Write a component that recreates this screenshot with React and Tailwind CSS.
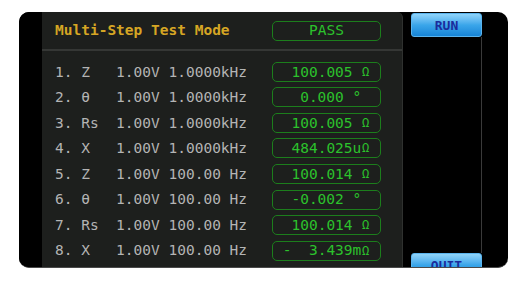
import React from 'react';

const rows = [
  { label: '1. Z   1.00V 1.0000kHz', value: '100.005 ', unit: 'Ω' },
  { label: '2. θ   1.00V 1.0000kHz', value: '0.000 ° ', unit: '' },
  { label: '3. Rs  1.00V 1.0000kHz', value: '100.005 ', unit: 'Ω' },
  { label: '4. X   1.00V 1.0000kHz', value: '484.025u', unit: 'Ω' },
  { label: '5. Z   1.00V 100.00 Hz', value: '100.014 ', unit: 'Ω' },
  { label: '6. θ   1.00V 100.00 Hz', value: '-0.002 ° ', unit: '' },
  { label: '7. Rs  1.00V 100.00 Hz', value: '100.014 ', unit: 'Ω' },
  { label: '8. X   1.00V 100.00 Hz', value: '-  3.439m', unit: 'Ω' },
];

const mono = "font-['DejaVu_Sans_Mono','Liberation_Mono',monospace]";

const Screen = () => {
  return (
    <div className="ml-[19px] mt-[12px] w-[489px] h-[256px] rounded-[10px] bg-black overflow-hidden flex border-b border-[#4a4a4a]">
      {/* left bezel */}
      <div className="w-[23px] shrink-0 bg-black" />

      {/* main panel */}
      <div className="w-[361px] shrink-0 h-full bg-[#1d1f1d] rounded-tr-[6px] border-r border-[#2f312f] flex flex-col">
        <div className={`h-[39px] shrink-0 flex items-center border-b-2 border-[#353735] ${mono}`}>
          <div className="w-[230px] shrink-0 pl-[13px] text-[14.5px] font-bold text-[#d6a624] leading-none">
            Multi-Step Test Mode
          </div>
          <div className="w-[109px] h-[20px] shrink-0 rounded-[5px] border border-[#1c7e1c] flex items-center justify-center text-[14.5px] text-[#2cc22c] leading-none">
            PASS
          </div>
        </div>

        <div className={`pt-[8px] flex flex-col ${mono}`}>
          {rows.map((r) => (
            <div key={r.label} className="h-[25.57px] flex items-center">
              <div className="w-[230px] shrink-0 pl-[13px] whitespace-pre text-[14.5px] text-[#b4b4b4] leading-none">
                {r.label}
              </div>
              <div className="w-[109px] h-[20px] shrink-0 rounded-[5px] border border-[#1c7e1c] flex items-center justify-end pr-[10px] whitespace-pre text-[14.5px] text-[#2cc22c] leading-none">
                {r.value}
                {r.unit && (
                  <span className="inline-block w-[8.7px] text-center text-[12px]">{r.unit}</span>
                )}
              </div>
            </div>
          ))}
        </div>
      </div>

      {/* right button column */}
      <div className="flex-1 flex flex-col pl-[8px] pt-[1px]">
        <div className="w-[71px] h-[24px] shrink-0 rounded-[3px] bg-gradient-to-b from-[#8fd4fa] via-[#3aa6ea] to-[#1684d6] border border-[#5ab4ee] flex items-center justify-center">
          <span className="font-['DejaVu_Sans_Mono',monospace] font-bold text-[13px] text-[#1b2b9c] leading-none">RUN</span>
        </div>
        <div className="w-[71px] h-[216px] shrink-0 border-r border-[#3a3a3a]" />
        <div className="w-[71px] h-[24px] shrink-0 rounded-[3px] bg-gradient-to-b from-[#8fd4fa] via-[#3aa6ea] to-[#1684d6] border border-[#5ab4ee] flex items-center justify-center">
          <span className="font-['DejaVu_Sans_Mono',monospace] font-bold text-[13px] text-[#1b2b9c] leading-none">QUIT</span>
        </div>
      </div>
    </div>
  );
};

export default function App() {
  return (
    <div className="w-[531px] h-[281px] bg-white overflow-hidden">
      <Screen />
    </div>
  );
}
